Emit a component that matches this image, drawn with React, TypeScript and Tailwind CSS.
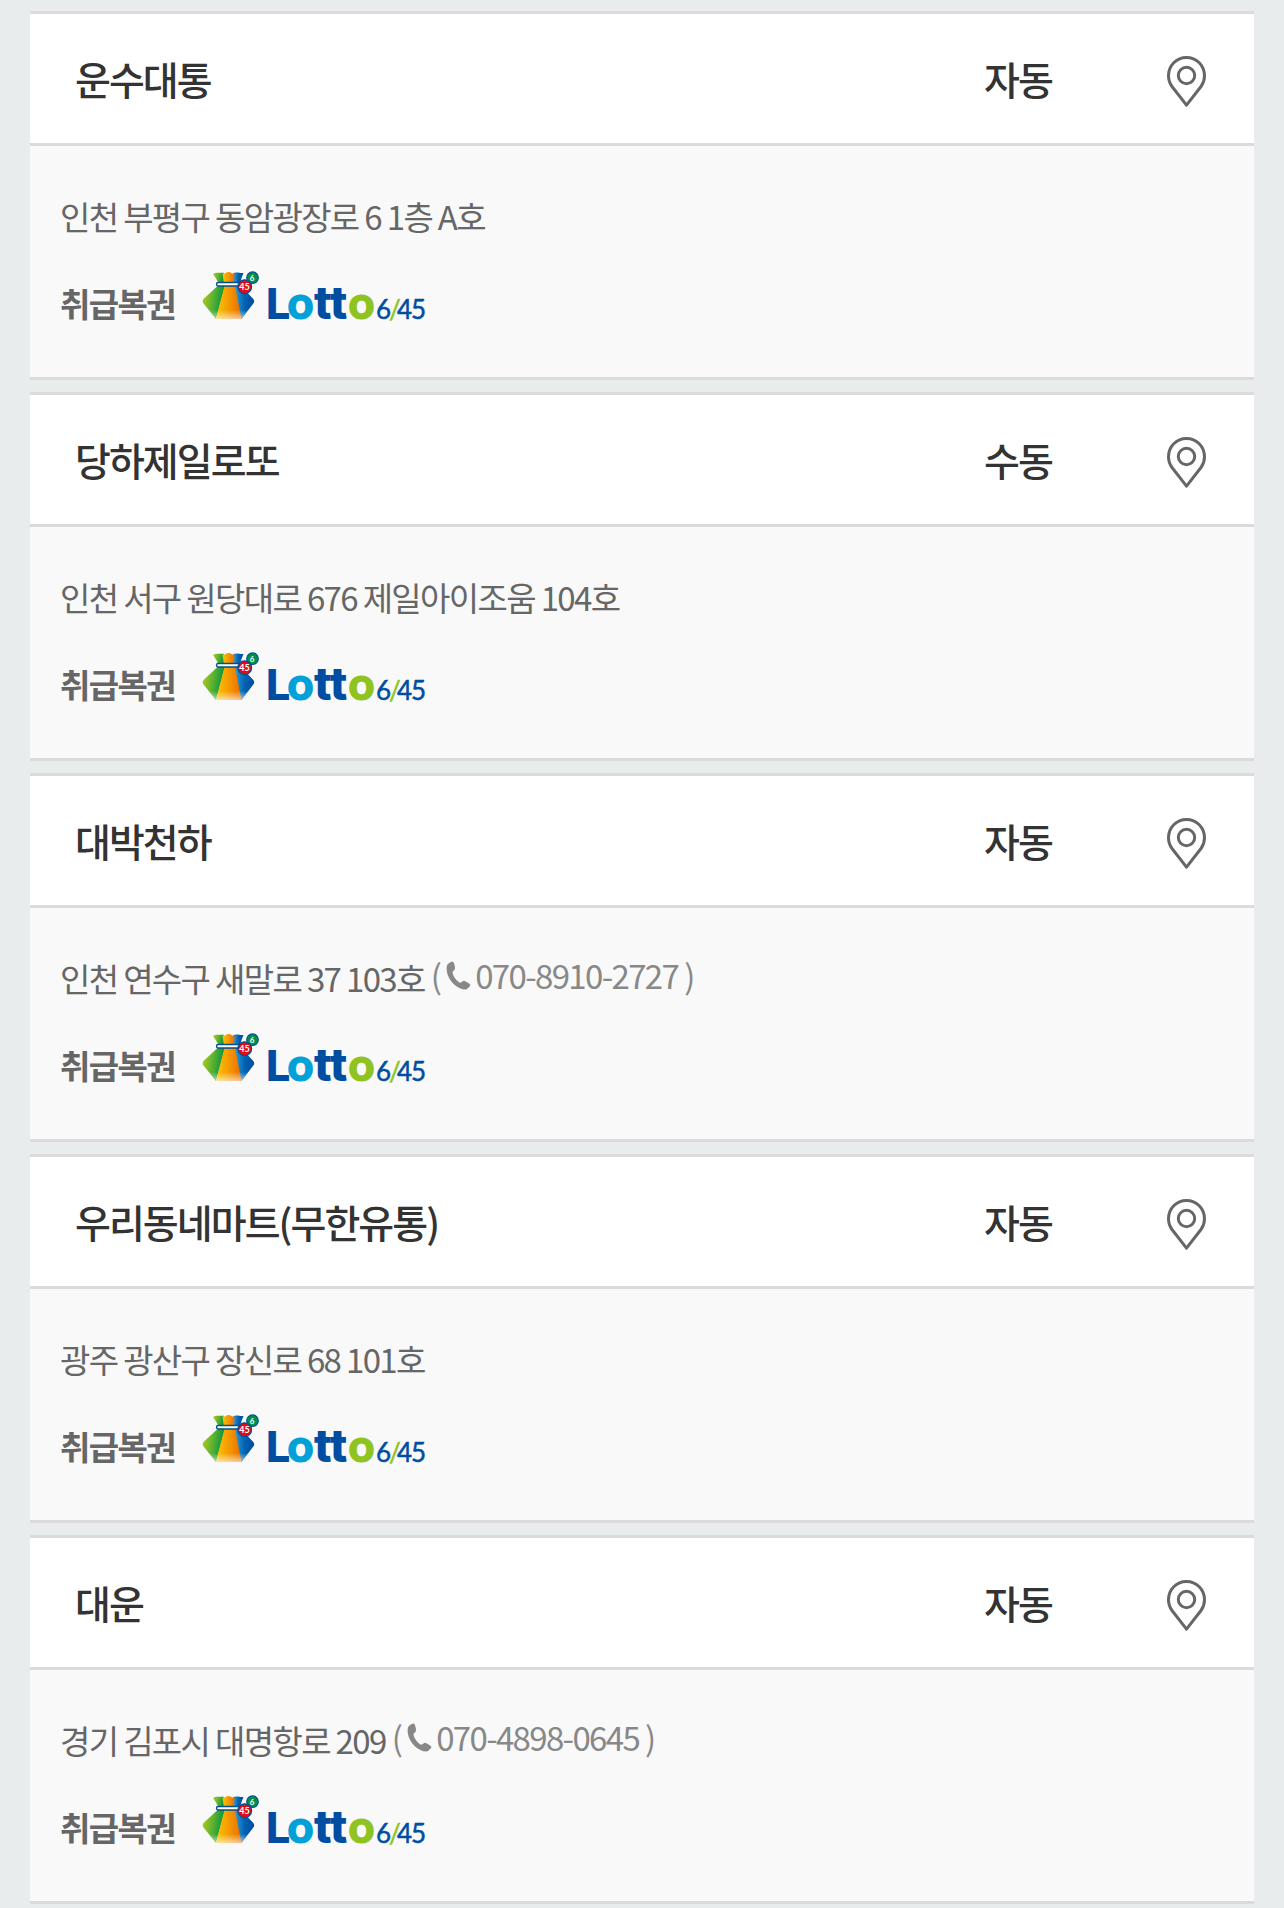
interface Store {
  name: string
  method: string
  address: string
  phone?: string
}

const STORES: Store[] = [
  { name: '운수대통', method: '자동', address: '인천 부평구 동암광장로 6 1층 A호' },
  { name: '당하제일로또', method: '수동', address: '인천 서구 원당대로 676 제일아이조움 104호' },
  { name: '대박천하', method: '자동', address: '인천 연수구 새말로 37 103호', phone: '070-8910-2727' },
  { name: '우리동네마트(무한유통)', method: '자동', address: '광주 광산구 장신로 68 101호' },
  { name: '대운', method: '자동', address: '경기 김포시 대명항로 209', phone: '070-4898-0645' },
]

export default function App() {
  return (
    <main className="min-h-screen bg-[#e8ecec] px-[30px] pt-[11px] font-['Noto_Sans_CJK_KR',sans-serif]">
      <LogoGradients />
      <ul className="flex flex-col gap-3">
        {STORES.map(store => <StoreCard key={store.name} store={store} />)}
      </ul>
    </main>
  )
}

function StoreCard({ store }: { store: Store }) {
  return (
    <li className="border-y-3 border-[#dbdbdb] bg-[#f9f9f9]">
      <div className="flex items-center border-b-3 border-[#dbdbdb] bg-white py-9 text-[39px] leading-[57px] font-medium tracking-tighter text-[#333]">
        <h2 className="flex-1 pl-[45px]">{store.name}</h2>
        <p className="w-[202px] text-center">{store.method}</p>
        <div className="flex w-[135px] justify-center pt-1.5">
          <a href="#map" aria-label={`${store.name} 위치 보기`}>
            <PinIcon />
          </a>
        </div>
      </div>

      <div className="px-[30px] pt-[46px] pb-[50px] text-[33px] leading-[48px] tracking-tighter text-[#666]">
        <p className="flex items-start gap-1.5">
          <span>{store.address}</span>
          {store.phone && (
            <span className="flex items-center leading-[42px] text-[#888]">
              (
              <a href={`tel:${store.phone}`} className="flex items-center gap-1 px-1.5">
                <PhoneIcon />
                {store.phone}
              </a>
              )
            </span>
          )}
        </p>
        <div className="mt-[30px] flex items-end gap-[27px]">
          <strong className="font-bold">취급복권</strong>
          <LottoLogo />
        </div>
      </div>
    </li>
  )
}

function PinIcon() {
  return (
    <svg width="39" height="51" viewBox="0 0 39 51" fill="none" stroke="#666" strokeWidth="3">
      <path d="M19.500 49.200L5 30.500C2.800 27.500 1.500 23.500 1.500 19.800C1.500 9.500 9.500 1.500 19.500 1.500S37.500 9.500 37.500 19.800C37.500 23.500 36.200 27.500 34 30.500Z" strokeLinejoin="round" />
      <circle cx="19.500" cy="19.500" r="8.200" />
    </svg>
  )
}

function PhoneIcon() {
  return (
    <svg width="25" height="29" viewBox="0 0 25 29" fill="#888">
      <path d="M1.500 3.500C3 2 5 .8 7 .6C8.500 3 9 5 9 7.500C8.700 9.500 6.500 10 6.500 11.500C7 15 10 19 13.500 21.500C15.500 22.300 16.500 20 18 19.800C20.500 20.600 22.800 22 24.500 24C23.500 26 21.500 28 19.500 28.600C11.500 28.500 2 20 .8 10C.5 7.500.6 5 1.500 3.500Z" />
    </svg>
  )
}

// Shared by every logo on the page
function LogoGradients() {
  return (
    <svg className="absolute h-0 w-0" aria-hidden="true">
      <defs>
        <linearGradient id="bag-green" x1="0" y1="0" x2="1" y2="0.2">
          <stop offset="0" stopColor="#b4cc1c" />
          <stop offset="0.45" stopColor="#69b52f" />
          <stop offset="1" stopColor="#009540" />
        </linearGradient>
        <linearGradient id="bag-orange" x1="0" y1="0" x2="1" y2="0">
          <stop offset="0" stopColor="#fcc400" />
          <stop offset="0.5" stopColor="#f59a00" />
          <stop offset="1" stopColor="#ea6c00" />
        </linearGradient>
        <linearGradient id="bag-blue" x1="0" y1="0" x2="1" y2="0">
          <stop offset="0" stopColor="#37a9e0" />
          <stop offset="0.55" stopColor="#0062b1" />
          <stop offset="1" stopColor="#004a9c" />
        </linearGradient>
        <linearGradient id="bag-shine" x1="0" y1="0" x2="0" y2="1">
          <stop offset="0" stopColor="#fff" stopOpacity="0" />
          <stop offset="1" stopColor="#fff" stopOpacity="0.6" />
        </linearGradient>
      </defs>
    </svg>
  )
}

function LottoLogo() {
  return (
    <svg width="224" height="51" viewBox="0 0 224 51" className="mb-1.5 overflow-visible" role="img" aria-label="Lotto 6/45">
      <path d="M11 4C14 1.500 18 3.500 21.500 2.500L23 14H16.500C15.500 10 13 7 11 4Z" fill="url(#bag-green)" />
      <path d="M31 3C35 1.500 38 3.500 41.500 3C40 7 38.500 10 38 14H30.500Z" fill="url(#bag-blue)" />
      <path d="M20.500 3.500C23 4.500 24 2 26.500 2C29 2 30 4.500 32.500 3.500L32 14H22Z" fill="url(#bag-orange)" />
      <path d="M15.500 16H23L14 49C10 44 5 38 1.500 33.500C.4 32 .4 30.500 1.500 29Z" fill="url(#bag-green)" />
      <path d="M31 16H39L51.300 29C52.500 30.500 52.500 32 51.300 33.500L39.500 49H36Z" fill="url(#bag-blue)" />
      <path d="M22.500 16H33L39.500 49H14Z" fill="url(#bag-orange)" />
      <path d="M7 40H46.500L39.500 49H14Z" fill="url(#bag-shine)" />
      <rect x="14.500" y="12.500" width="25" height="3.500" rx="1.700" fill="#fff" stroke="#004f8f" strokeWidth="1.400" />
      <circle cx="50.500" cy="7.700" r="5.800" fill="#008f4c" stroke="#00528f" strokeWidth="1.200" />
      <circle cx="42.700" cy="16.700" r="6.900" fill="#e10b1c" stroke="#00528f" strokeWidth="1.200" />
      <g className="tracking-normal" fill="#fff" fontFamily="Lato, sans-serif" fontWeight="700" textAnchor="middle">
        <text x="50" y="10.700" fontSize="8">6</text>
        <text x="42.500" y="20" fontSize="9">45</text>
      </g>
      <g className="tracking-normal" fontFamily="Inter, sans-serif" fontWeight="800" fill="#004ea2">
        <text x="64" y="49" fontSize="43">L</text>
        <text x="112" y="49" fontSize="46">tt</text>
      </g>
      <g className="tracking-normal" fontFamily="Inter, sans-serif" fontWeight="700" fontSize="44" strokeWidth="1">
        <text x="85" y="49" fill="#00a0d8" stroke="#00a0d8">o</text>
        <text x="146" y="49" fill="#8fc31f" stroke="#8fc31f">o</text>
      </g>
      <g className="tracking-normal" fontFamily="Lato, sans-serif" fontWeight="400" fontSize="26" strokeWidth="0.500" fill="#004ea2" stroke="#004ea2">
        <text x="174" y="49">6</text>
        <text x="187" y="49" fill="#8fc31f" stroke="#8fc31f">/</text>
        <text x="195" y="49">4</text>
        <text x="209" y="49">5</text>
      </g>
    </svg>
  )
}
